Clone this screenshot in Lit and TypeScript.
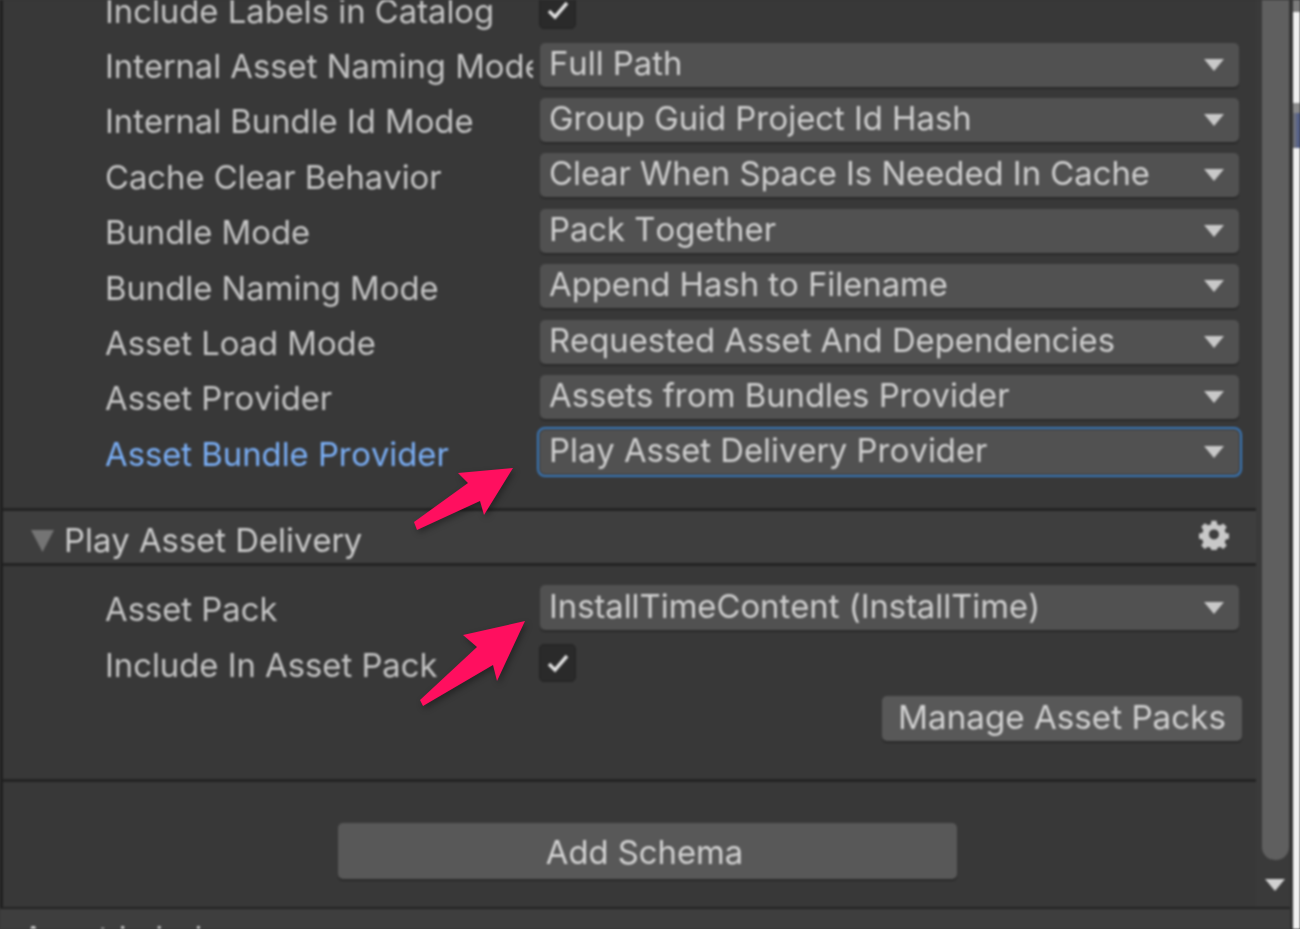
import { LitElement, html, css, svg } from "lit";
import { customElement } from "lit/decorators.js";

const topRows: [string, string, boolean?][] = [
  ["Internal Asset Naming Mode", "Full Path"],
  ["Internal Bundle Id Mode", "Group Guid Project Id Hash"],
  ["Cache Clear Behavior", "Clear When Space Is Needed In Cache"],
  ["Bundle Mode", "Pack Together"],
  ["Bundle Naming Mode", "Append Hash to Filename"],
  ["Asset Load Mode", "Requested Asset And Dependencies"],
  ["Asset Provider", "Assets from Bundles Provider"],
  ["Asset Bundle Provider", "Play Asset Delivery Provider", true],
];

const caret = html`<svg class="caret" viewBox="0 0 20 12"><path d="M0 0H20L10 12Z" /></svg>`;
const check = html`<span class="checkbox"><svg viewBox="0 0 24 20"><path d="M3 11L9 17L21 3" /></svg></span>`;

@customElement("app-root")
export class AppRoot extends LitElement {
  static styles = css`
    :host {
      display: block;
      position: relative;
      width: 1300px;
      height: 929px;
      overflow: hidden;
      background: #383838;
      font-family: Inter, "Liberation Sans", sans-serif;
      font-size: 32.8px;
      font-kerning: none;
      font-feature-settings: "calt" 0;
      color: #c4c4c4;
    }
    .frame { display: flex; height: 929px; filter: blur(0.9px); }
    .window { width: 1290px; display: flex; flex-direction: column; background: #383838; }
    .upper { display: flex; height: 907px; overflow: hidden; }
    .panel { width: 1256px; box-sizing: border-box; border-left: 3px solid #202020; overflow: hidden; flex: none; }
    .body { margin-top: -18px; padding-bottom: 27px; }
    .row { display: flex; align-items: center; height: 55.4px; padding: 0 17px 0 102px; }
    .label { width: 428px; margin-right: 7px; padding-top: 2px; flex: none; overflow: hidden; white-space: nowrap; }
    .section .label { padding-top: 4px; }
    .label.active { color: #7aaef5; }
    .control { flex: 1; display: flex; align-items: center; min-width: 0; }
    .dropdown {
      flex: 1; height: 44px; margin-top: -1px; box-sizing: border-box;
      display: flex; align-items: center; justify-content: space-between;
      padding: 0 15px 4px 9px; background: #515151; border-radius: 5px;
      box-shadow: 0 2px 1px #2a2a2a; white-space: nowrap; color: #cfcfcf;
    }
    .dropdown .caret { margin-top: 4px; }
    .section .dropdown { height: 45px; padding-bottom: 2px; margin-top: 0; }
    .dropdown.focus { box-shadow: none; outline: 2px solid #3a79bb; outline-offset: 1px; }
    .caret { width: 20px; height: 12px; fill: #c8c8c8; flex: none; }
    .checkbox {
      width: 37px; height: 38px; margin-left: -1px; box-sizing: border-box; background: #2a2a2a;
      border: 1px solid #232323; border-radius: 5px;
      display: flex; align-items: center; justify-content: center;
    }
    .checkbox svg { width: 24px; height: 20px; fill: none; stroke: #e0e0e0; stroke-width: 3.5; }
    .sep { height: 3px; background: #232323; }
    .header {
      height: 52px; background: #3e3e3e; display: flex; align-items: center;
      padding: 6px 27px 0 28px; box-sizing: border-box; color: #cbcbcb;
    }
    .tri { width: 23px; height: 22px; fill: #747474; margin-right: 10px; flex: none; margin-top: 2px; }
    .title { flex: 1; }
    .gear { width: 30px; height: 30px; fill: #c8c8c8; margin-top: -10px; }
    .section { padding: 14px 0 0; height: 213px; box-sizing: border-box; }
    .btnrow { display: flex; justify-content: flex-end; padding: 6px 14px 0 0; }
    .btn {
      background: #585858; border-radius: 5px; box-shadow: 0 2px 1px #2a2a2a;
      display: flex; align-items: center; justify-content: center; color: #d2d2d2; white-space: nowrap;
      box-sizing: border-box;
    }
    .manage { width: 360px; height: 45px; padding-bottom: 3px; font-size: 33.2px; }
    .addwrap { display: flex; justify-content: flex-start; padding: 41px 0 0 335px; }
    .add { width: 619px; height: 56px; padding: 3px 6px 0 0; }
    .scroll { flex: 1; background: #3a3a3a; display: flex; flex-direction: column; align-items: flex-end; }
    .thumb { width: 27px; height: 860px; background: #5f5f5f; border-radius: 0 0 13px 13px; flex: none; margin-right: 1px; }
    .scroll .caret { margin: 19px 5px 0 0; fill: #d0d0d0; }
    .lower { flex: 1; border-top: 2px solid #232323; background: #3e3e3e; padding-left: 22px; overflow: hidden; line-height: 58px; color: #c4c4c4; }
    .edge { width: 3px; background: #333333; }
    .right { flex: 1; background: #f0f0f0; display: flex; flex-direction: column; }
    .r1 { height: 12px; background: #7c7c7c; }
    .r2 { height: 91px; }
    .r3 { height: 10px; background: #8a8a8a; }
    .r4 { height: 35px; background: linear-gradient(to right, #777777, #4a5a90); }
    .arrows { position: absolute; inset: 0; width: 1300px; height: 929px; pointer-events: none; filter: drop-shadow(2px 3px 3px rgba(0,0,0,.35)) blur(0.6px); }
    .arrows path { fill: #ff0f5f; }
  `;

  render() {
    return html`
      <div class="frame">
        <div class="window">
          <div class="upper">
            <div class="panel">
              <div class="body">
                <div class="row"><div class="label">Include Labels in Catalog</div><div class="control">${check}</div></div>
                ${topRows.map(([l, v, f]) => html`
                  <div class="row">
                    <div class="label ${f ? "active" : ""}">${l}</div>
                    <div class="control"><div class="dropdown ${f ? "focus" : ""}"><span>${v}</span>${caret}</div></div>
                  </div>`)}
              </div>
              <div class="sep"></div>
              <div class="header">
                <svg class="tri" viewBox="0 0 23 22"><path d="M0 0H23L11.5 22Z" /></svg>
                <span class="title">Play Asset Delivery</span>
                <svg class="gear" viewBox="0 0 24 24"><path fill-rule="evenodd" d="M10 1h4l.6 3 2.2.9 2.6-1.7 2.8 2.8-1.7 2.6.9 2.2 3 .6v4l-3 .6-.9 2.2 1.7 2.6-2.8 2.8-2.6-1.7-2.2.9-.6 3h-4l-.6-3-2.2-.9-2.6 1.7-2.8-2.8 1.7-2.6-.9-2.2-3-.6v-4l3-.6.9-2.2L1.8 5.8l2.8-2.8 2.6 1.7L9.4 4zM12 8a4 4 0 1 0 0 8 4 4 0 0 0 0-8z" transform="translate(0 -.5)"/></svg>
              </div>
              <div class="sep"></div>
              <div class="section">
                <div class="row">
                  <div class="label">Asset Pack</div>
                  <div class="control"><div class="dropdown"><span>InstallTimeContent (InstallTime)</span>${caret}</div></div>
                </div>
                <div class="row"><div class="label">Include In Asset Pack</div><div class="control">${check}</div></div>
                <div class="btnrow"><div class="btn manage">Manage Asset Packs</div></div>
              </div>
              <div class="sep"></div>
              <div class="addwrap"><div class="btn add">Add Schema</div></div>
            </div>
            <div class="scroll">
              <div class="thumb"></div>
              ${caret}
            </div>
          </div>
          <div class="lower">Asset Labels</div>
        </div>
        <div class="edge"></div>
        <div class="right"><div class="r1"></div><div class="r2"></div><div class="r3"></div><div class="r4"></div></div>
      </div>
      <svg class="arrows" viewBox="0 0 1300 929">
        ${svg`<path d="M513 468L458 473L468 483L414 522L417 530L480 501L484 515Z" />`}
        ${svg`<path d="M525 621L463 635L477 647L420 700L423 706L493 665L497 681Z" />`}
      </svg>
    `;
  }
}
